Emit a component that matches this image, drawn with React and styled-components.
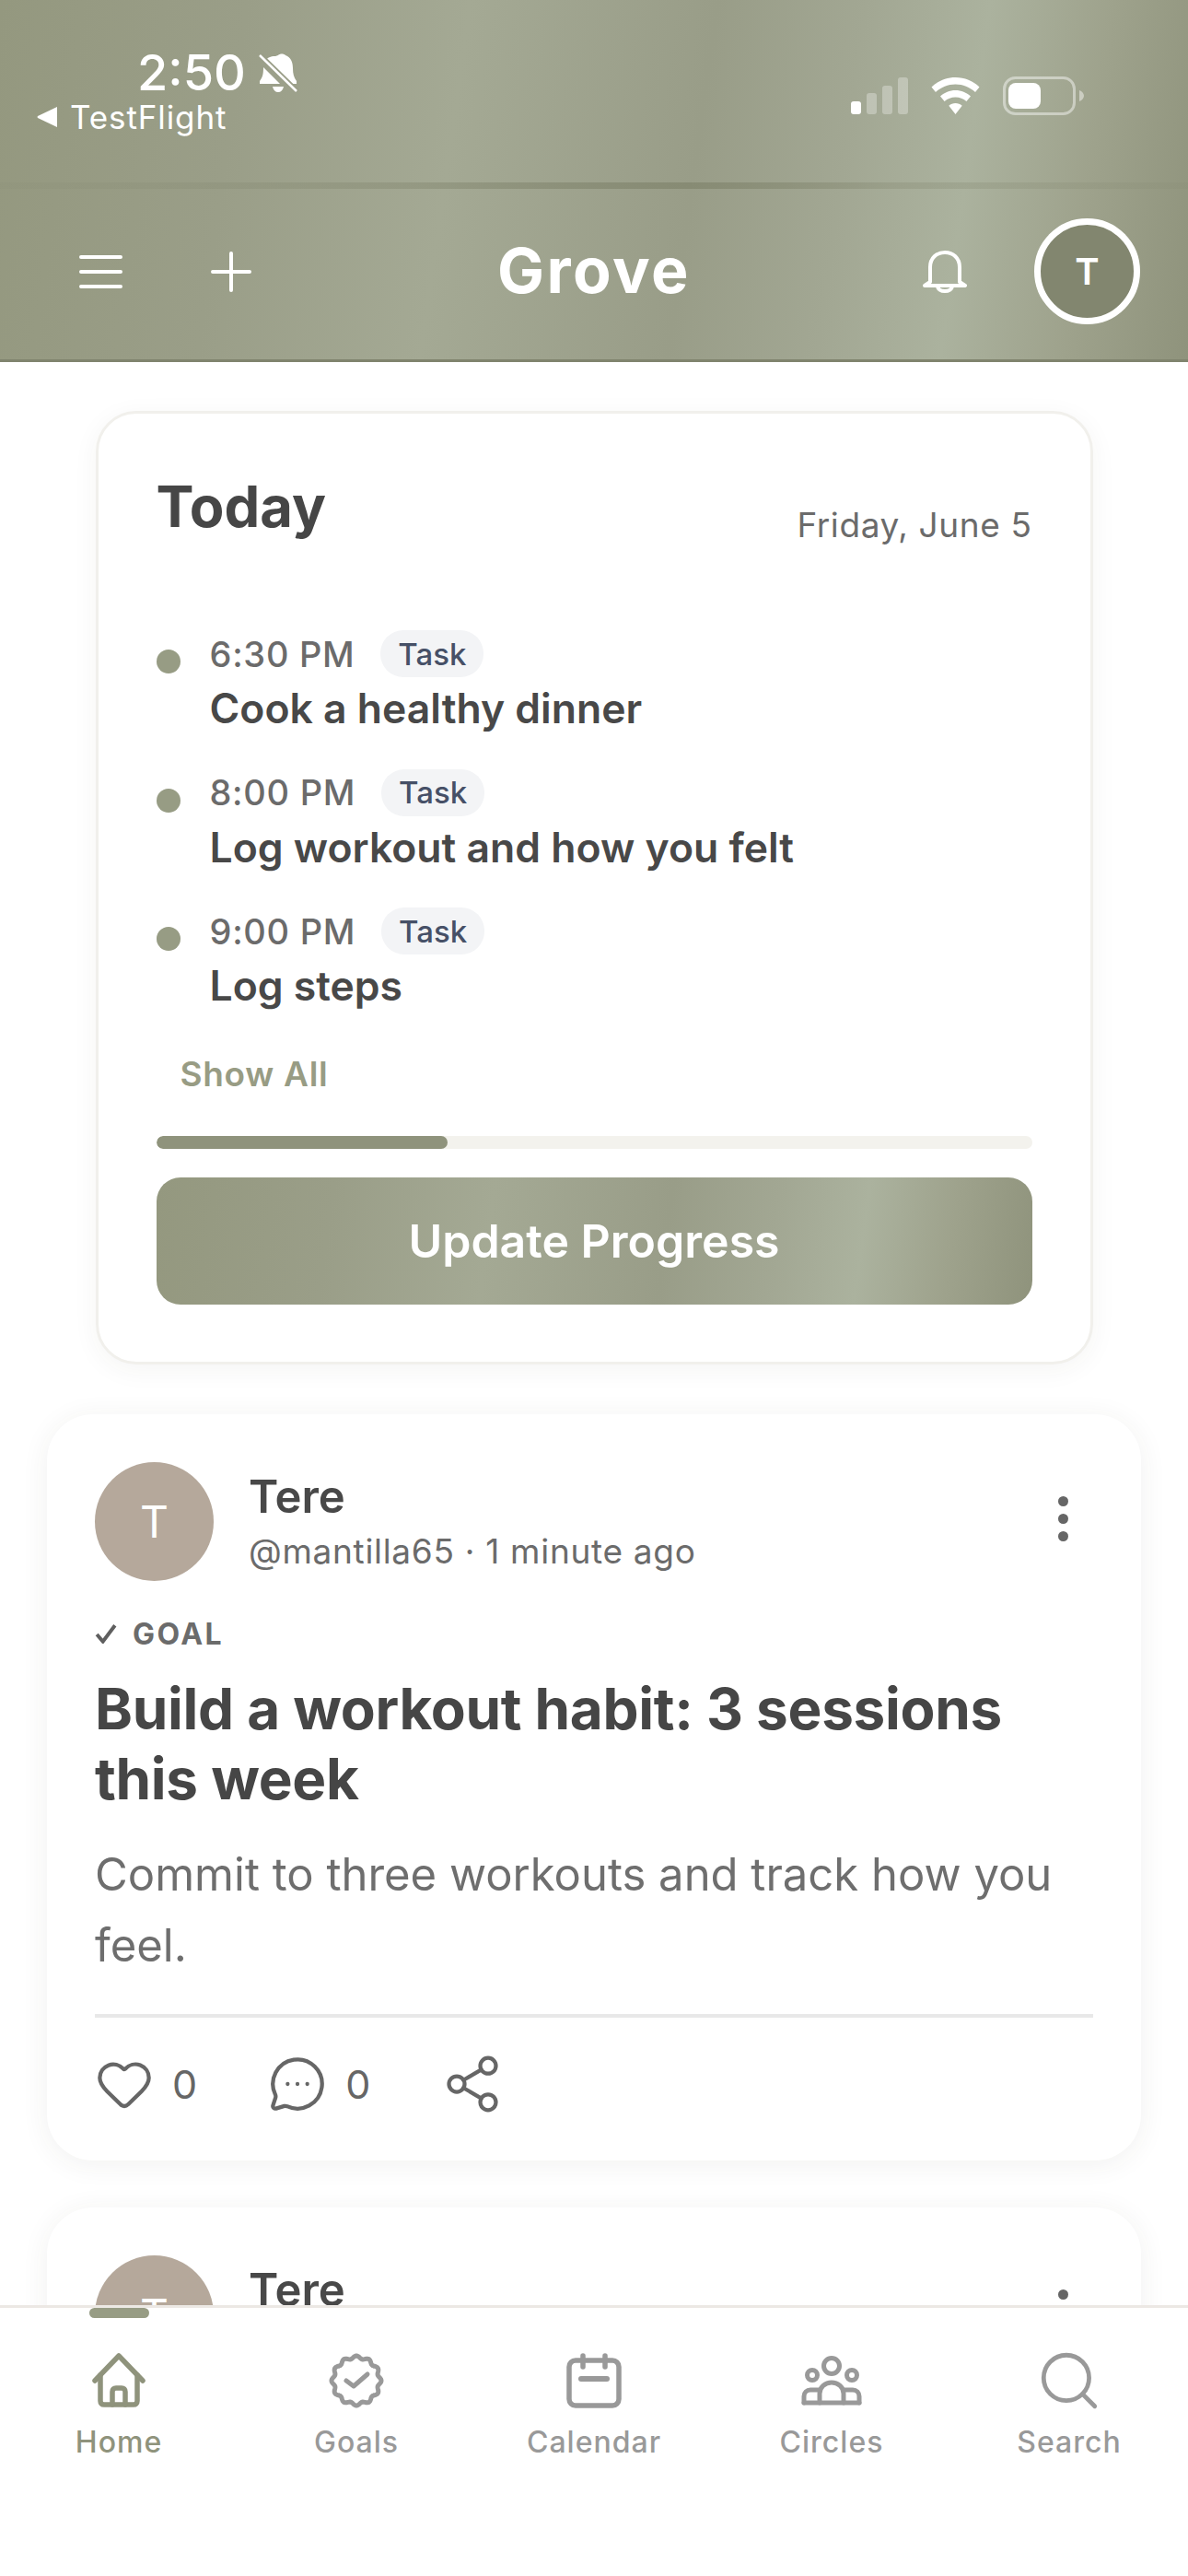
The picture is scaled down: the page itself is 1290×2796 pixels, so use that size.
import React from "react";
import styled, { createGlobalStyle } from "styled-components";
import { Heart, MessageCircleMore, Share2, Search } from "lucide-react";

const Global = createGlobalStyle`
  html, body { margin: 0; padding: 0; background: #fff; }
  * { box-sizing: border-box; }
  body { font-family: Inter, "Noto Sans", "Liberation Sans", sans-serif; }
`;

const sage = "linear-gradient(98deg, #94987f 0%, #9a9e88 20%, #a4a994 38%, #999d88 58%, #a2a793 70%, #abb29e 80%, #9ea28c 90%, #8f937c 100%)";

const Screen = styled.div`
  width: 1290px;
  height: 2796px;
  display: flex;
  flex-direction: column;
  overflow: hidden;
  background: #fff;
`;
const TopBar = styled.header`
  flex: none;
  height: 393px;
  background: ${sage};
  display: flex;
  flex-direction: column;
  border-bottom: 3px solid #80846e;
  color: #fff;
`;
const StatusBar = styled.div`
  height: 198px;
  padding: 52px 113px 0 40px;
  display: flex;
  justify-content: space-between;
  align-items: flex-start;
`;
const StatusLeft = styled.div`
  display: flex;
  flex-direction: column;
`;
const TimeRow = styled.div`
  display: flex;
  align-items: center;
  gap: 14px;
  padding-left: 109px;
  height: 54px;
`;
const Time = styled.span`
  font-size: 54px;
  font-weight: 500;
  line-height: 54px;
`;
const AppBack = styled.div`
  display: flex;
  align-items: center;
  gap: 14px;
  height: 42px;
  font-size: 35px;
  font-weight: 400;
  letter-spacing: 0.9px;
`;
const StatusRight = styled.div`
  display: flex;
  align-items: center;
  gap: 25px;
  padding-top: 31px;
`;
const Seam = styled.div`
  height: 7px;
  background: linear-gradient(90deg, rgba(134,138,115,0.15) 0%, rgba(134,138,115,0.5) 35%, #878b74 58%, rgba(134,138,115,0.35) 75%, rgba(134,138,115,0.2) 100%);
`;
const NavRow = styled.div`
  flex: 1;
  display: grid;
  grid-template-columns: 1fr auto 1fr;
  align-items: center;
  padding: 0 52px 6px;
`;
const NavGroup = styled.div`
  display: flex;
  align-items: center;
  justify-content: ${p => p.$end ? "flex-end" : "flex-start"};
  gap: ${p => p.$gap}px;
  padding-left: ${p => p.$inset || 0}px;
`;
const Brand = styled.h1`
  margin: 0 0 3px;
  font-size: 68px;
  line-height: 84px;
  font-weight: 700;
  letter-spacing: 2.5px;
`;
const HeaderAvatar = styled.div`
  width: 115px;
  height: 115px;
  border-radius: 50%;
  border: 7px solid #fff;
  background: #82866f;
  display: flex;
  align-items: center;
  justify-content: center;
  font-size: 40px;
  font-weight: 600;
`;

const Feed = styled.main`
  flex: 1;
  min-height: 0;
  overflow: hidden;
  display: flex;
  flex-direction: column;
  align-items: center;
  padding-top: 53px;
`;
const TodayCard = styled.section`
  flex: none;
  width: 1083px;
  height: 1035px;
  border-radius: 44px;
  border: 3px solid #f1f0ec;
  box-shadow: 0 6px 28px rgba(60, 60, 40, 0.05);
  padding: 56px 63px 0 63px;
  background: #fff;
  margin-bottom: 54px;
`;
const TodayHead = styled.div`
  display: flex;
  justify-content: space-between;
  align-items: flex-end;
  height: 90px;
  margin-bottom: 89px;
`;
const TodayTitle = styled.h2`
  margin: 0;
  font-size: 61.5px;
  line-height: 90px;
  font-weight: 700;
  color: #464646;
`;
const DateText = styled.span`
  font-size: 37px;
  line-height: 50px;
  color: #6b6b6b;
  letter-spacing: 0.6px;
`;
const TaskRow = styled.div`
  display: flex;
  gap: 32px;
  height: 150.5px;
`;
const Dot = styled.span`
  flex: none;
  width: 26px;
  height: 26px;
  border-radius: 50%;
  background: #979c84;
  margin-top: 21px;
`;
const TaskBody = styled.div`
  display: flex;
  flex-direction: column;
`;
const TaskMeta = styled.div`
  display: flex;
  align-items: center;
  gap: 28px;
  height: 51px;
`;
const TaskTime = styled.span`
  font-size: 38px;
  font-weight: 500;
  color: #6b6b6b;
  letter-spacing: 0.7px;
`;
const Pill = styled.span`
  height: 51px;
  width: 112px;
  border-radius: 25px;
  background: #f3f4f6;
  color: #465067;
  display: flex;
  align-items: center;
  justify-content: center;
  font-size: 33px;
  font-weight: 500;
`;
const TaskName = styled.div`
  font-size: 44.5px;
  font-weight: 600;
  line-height: 60px;
  margin-top: 4px;
  color: #484848;
`;
const ShowAll = styled.button`
  display: block;
  border: 0;
  background: none;
  padding: 0;
  margin: 5px 0 0 26px;
  font-family: inherit;
  font-size: 37px;
  line-height: 50px;
  font-weight: 600;
  letter-spacing: 0.7px;
  color: #989c84;
`;
const Track = styled.div`
  margin-top: 42px;
  height: 14px;
  border-radius: 7px;
  background: #f3f2ed;
  overflow: hidden;
`;
const Fill = styled.div`
  height: 100%;
  border-radius: 7px;
  background: #8f937c;
`;
const UpdateButton = styled.button`
  display: block;
  width: 100%;
  height: 138px;
  margin-top: 31px;
  border: 0;
  border-radius: 26px;
  background: ${sage};
  color: #fff;
  font-family: inherit;
  font-size: 50px;
  font-weight: 600;
`;

const PostCard = styled.article`
  flex: none;
  width: 1188px;
  border-radius: 50px;
  background: #fff;
  box-shadow: 0 4px 30px rgba(60, 60, 40, 0.07);
  padding: 52px 52px 0 52px;
  height: ${p => p.$h}px;
  margin-bottom: 51px;
`;
const PostHead = styled.div`
  display: flex;
  align-items: center;
  gap: 38px;
`;
const PostAvatar = styled.div`
  flex: none;
  width: 129px;
  height: 129px;
  border-radius: 50%;
  background: #b5a89b;
  color: #fff;
  display: flex;
  align-items: center;
  justify-content: center;
  font-size: 48px;
  font-weight: 400;
`;
const Who = styled.div`
  flex: 1;
  display: flex;
  flex-direction: column;
  gap: 4px;
`;
const Name = styled.div`
  font-size: 49px;
  line-height: 60px;
  font-weight: 600;
  color: #484848;
`;
const Handle = styled.div`
  font-size: 37px;
  line-height: 50px;
  color: #6b6b6b;
  letter-spacing: 0.7px;
`;
const Kebab = styled.div`
  display: flex;
  flex-direction: column;
  gap: 8px;
  margin: 0 27px 6px 0;
`;
const KebabDot = styled.span`
  width: 11px;
  height: 11px;
  border-radius: 50%;
  background: #666;
`;
const TypeTag = styled.div`
  display: flex;
  align-items: center;
  gap: 17px;
  margin-top: 39px;
  height: 36px;
  font-size: 32px;
  font-weight: 700;
  letter-spacing: 2.4px;
  color: #6b6b6b;
`;
const PostTitle = styled.h3`
  margin: 26px 0 0;
  font-size: 62px;
  line-height: 76px;
  font-weight: 700;
  letter-spacing: -0.3px;
  color: #464646;
`;
const PostText = styled.p`
  margin: 27px 0 0;
  font-size: 49px;
  line-height: 77px;
  color: #6e6e6e;
`;
const Actions = styled.div`
  margin-top: 36px;
  border-top: 4px solid #e8e8e8;
  padding-top: 38px;
  display: flex;
  align-items: center;
  gap: 77px;
  color: #666;
`;
const Action = styled.div`
  display: flex;
  align-items: center;
  gap: 20px;
  font-size: 43px;
`;

const TabBar = styled.nav`
  flex: none;
  position: relative;
  height: 294px;
  background: #fff;
  border-top: 3px solid #ece8e4;
  display: grid;
  grid-template-columns: repeat(5, 1fr);
  align-items: start;
  padding-top: 46px;
`;
const ActiveMark = styled.span`
  position: absolute;
  left: 97px;
  top: 0;
  width: 65px;
  height: 11px;
  border-radius: 6px;
  background: #979c84;
`;
const Tab = styled.div`
  display: flex;
  flex-direction: column;
  align-items: center;
  gap: 14px;
  color: ${p => (p.$active ? "#8f937c" : "#999")};
  font-size: 32px;
  font-weight: 500;
  letter-spacing: 1px;
  line-height: 40px;
`;
const TabIcon = styled.div`
  height: 66px;
  display: flex;
  align-items: center;
  justify-content: center;
`;

const SignalIcon = () => (
  <svg width="62" height="40" viewBox="0 0 62 40">
    <rect x="0" y="26" width="11" height="14" rx="3" fill="#fff" />
    <g fill="#fff" opacity="0.3">
      <rect x="17" y="17" width="11" height="23" rx="3" />
      <rect x="34" y="9" width="11" height="31" rx="3" />
      <rect x="51" y="0" width="11" height="40" rx="3" />
    </g>
  </svg>
);
const WifiIcon = () => (
  <svg width="53" height="40" viewBox="0 0 53 40">
    <path d="M26.5 0C16.5 0 7.5 3.8 0.5 10.5L5 16C11 10.6 18.4 7.5 26.5 7.5S42 10.6 48 16L52.5 10.5C45.5 3.8 36.5 0 26.5 0Z" fill="#fff" />
    <path d="M26.5 14C20.2 14 14.5 16.4 10 20.5L14.6 26C17.9 23.2 22 21.5 26.5 21.5S35.1 23.2 38.4 26L43 20.5C38.5 16.4 32.8 14 26.5 14Z" fill="#fff" />
    <path d="M26.5 28C23.8 28 21.3 29 19.3 30.7L26.5 40L33.7 30.7C31.7 29 29.2 28 26.5 28Z" fill="#fff" />
  </svg>
);
const BatteryIcon = () => (
  <svg width="88" height="42" viewBox="0 0 88 42">
    <rect x="1.5" y="1.5" width="76" height="39" rx="12" fill="none" stroke="#fff" strokeOpacity="0.45" strokeWidth="3" />
    <rect x="6" y="7" width="35" height="28" rx="8" fill="#fff" />
    <path d="M83 15C86 16 88 18.500 88 21S86 26 83 27Z" fill="#fff" fillOpacity="0.45" />
  </svg>
);
const MutedBell = () => (
  <svg width="44" height="46" viewBox="0 0 44 44">
    <path d="M21 3C23 1 27 1 29 3C35 5 37 11 37 17C37 23 38 27 41 31L41 34L33 34L8 8C10 5 14 4 16 4C17 4 19 4 21 3Z" fill="#fff" />
    <path d="M5 16C5 24 4 27 1 31L1 34L23 34Z" fill="#fff" />
    <path d="M15 37H27C26 41 24 43 21 43S16 41 15 37Z" fill="#fff" />
    <path d="M2 3L42 42" stroke="#9a9e88" strokeWidth="5" />
    <path d="M1 3L41 42" stroke="#fff" strokeWidth="2.500" />
  </svg>
);
const BackArrow = () => (
  <svg width="22" height="24" viewBox="0 0 22 24">
    <path d="M22 1V23L1 13Q0 12 1 11Z" fill="#fff" />
  </svg>
);
const MenuIcon = () => (
  <svg width="47" height="36" viewBox="0 0 47 36">
    <path d="M2 2H45M2 18H45M2 34H45" stroke="#fff" strokeWidth="4" strokeLinecap="round" />
  </svg>
);
const PlusIcon = () => (
  <svg width="44" height="44" viewBox="0 0 44 44">
    <path d="M2 22H42M22 2V42" stroke="#fff" strokeWidth="4" strokeLinecap="round" />
  </svg>
);
const HeaderBell = () => (
  <svg width="48" height="46" viewBox="0 0 48 46" fill="none" stroke="#fff" strokeWidth="4" strokeLinejoin="round">
    <path d="M8 34V18C8 8 15 2 24 2S40 8 40 18V34L46 38H2Z" />
    <path d="M16 38C16 46 32 46 32 38" />
  </svg>
);
const CheckMark = () => (
  <svg width="24" height="22" viewBox="0 0 22 20">
    <path d="M2 11L8 18L20 2" fill="none" stroke="#5f5f5f" strokeWidth="3.600" />
  </svg>
);
const HomeIcon = () => (
  <svg width="58" height="60" viewBox="0 0 58 60" fill="none" stroke="currentColor" strokeWidth="5.500" strokeLinecap="round" strokeLinejoin="round">
    <path d="M3 30L29 3L55 30" />
    <path d="M9 24V52C9 54.500 10.500 56 13 56H45C47.500 56 49 54.500 49 52V24" />
    <path d="M22 56V42C22 39.500 23.500 38 26 38H32C34.500 38 36 39.500 36 42V56" />
  </svg>
);
const scallop = (() => {
  const pts = [];
  for (let i = 0; i < 240; i++) {
    const a = (i / 240) * Math.PI * 2;
    const r = 25.5 + 1.5 * Math.cos(12 * a);
    pts.push(`${(30 + r * Math.sin(a)).toFixed(2)} ${(30 - r * Math.cos(a)).toFixed(2)}`);
  }
  return `M${pts.join("L")}Z`;
})();
const GoalsIcon = () => (
  <svg width="60" height="60" viewBox="0 0 60 60" fill="none" stroke="currentColor" strokeWidth="5" strokeLinecap="round" strokeLinejoin="round">
    <path d={scallop} />
    <path d="M19 30L27 36L42 23" />
  </svg>
);
const CalendarIcon = () => (
  <svg width="62" height="60" viewBox="0 0 62 60" fill="none" stroke="currentColor" strokeWidth="5.500" strokeLinecap="round">
    <rect x="4" y="8" width="54" height="49" rx="7" />
    <path d="M19 3V15M43 3V15" />
    <path d="M17 28H45" strokeWidth="6" />
  </svg>
);
const CirclesIcon = () => (
  <svg width="68" height="56" viewBox="0 0 68 56" fill="none" stroke="currentColor" strokeWidth="5" strokeLinecap="round">
    <circle cx="34" cy="12" r="8.500" />
    <circle cx="13" cy="22" r="5.500" />
    <circle cx="56" cy="22" r="5.500" />
    <path d="M21 52V42C21 35 27 30 34 30S47 35 47 42V52" />
    <path d="M21 38H11C7 38 4 41 4 45V52" />
    <path d="M47 38H57C61 38 64 41 64 45V52" />
    <path d="M4 52H64" />
  </svg>
);

const tasks = [
  ["6:30 PM", "Cook a healthy dinner"],
  ["8:00 PM", "Log workout and how you felt"],
  ["9:00 PM", "Log steps"],
];
const tabs = [
  ["Home", <HomeIcon />],
  ["Goals", <GoalsIcon />],
  ["Calendar", <CalendarIcon />],
  ["Circles", <CirclesIcon />],
  ["Search", <Search size={74} strokeWidth={1.55} />],
];

function Post({ h }) {
  return (
    <PostCard $h={h}>
      <PostHead>
        <PostAvatar>T</PostAvatar>
        <Who>
          <Name>Tere</Name>
          <Handle>@mantilla65 · 1 minute ago</Handle>
        </Who>
        <Kebab>
          <KebabDot />
          <KebabDot />
          <KebabDot />
        </Kebab>
      </PostHead>
      <TypeTag>
        <CheckMark />
        GOAL
      </TypeTag>
      <PostTitle>Build a workout habit: 3 sessions this week</PostTitle>
      <PostText>Commit to three workouts and track how you feel.</PostText>
      <Actions>
        <Action>
          <Heart size={64} strokeWidth={1.6} />0
        </Action>
        <Action>
          <MessageCircleMore size={64} strokeWidth={1.6} />0
        </Action>
        <Action>
          <Share2 size={68} strokeWidth={1.5} />
        </Action>
      </Actions>
    </PostCard>
  );
}

export default function App() {
  return (
    <Screen>
      <Global />
      <TopBar>
        <StatusBar>
          <StatusLeft>
            <TimeRow>
              <Time>2:50</Time>
              <MutedBell />
            </TimeRow>
            <AppBack>
              <BackArrow />
              TestFlight
            </AppBack>
          </StatusLeft>
          <StatusRight>
            <SignalIcon />
            <WifiIcon />
            <BatteryIcon />
          </StatusRight>
        </StatusBar>
        <Seam />
        <NavRow>
          <NavGroup $gap={96} $inset={34}>
            <MenuIcon />
            <PlusIcon />
          </NavGroup>
          <Brand>Grove</Brand>
          <NavGroup $gap={73} $end>
            <HeaderBell />
            <HeaderAvatar>T</HeaderAvatar>
          </NavGroup>
        </NavRow>
      </TopBar>
      <Feed>
        <TodayCard>
          <TodayHead>
            <TodayTitle>Today</TodayTitle>
            <DateText>Friday, June 5</DateText>
          </TodayHead>
          {tasks.map(([t, n]) => (
            <TaskRow key={t}>
              <Dot />
              <TaskBody>
                <TaskMeta>
                  <TaskTime>{t}</TaskTime>
                  <Pill>Task</Pill>
                </TaskMeta>
                <TaskName>{n}</TaskName>
              </TaskBody>
            </TaskRow>
          ))}
          <ShowAll>Show All</ShowAll>
          <Track>
            <Fill style={{ width: "33.3%" }} />
          </Track>
          <UpdateButton>Update Progress</UpdateButton>
        </TodayCard>
        <Post h={810} />
        <Post h={810} />
      </Feed>
      <TabBar>
        <ActiveMark />
        {tabs.map(([label, icon], i) => (
          <Tab key={label} $active={i === 0}>
            <TabIcon>{icon}</TabIcon>
            {label}
          </Tab>
        ))}
      </TabBar>
    </Screen>
  );
}
